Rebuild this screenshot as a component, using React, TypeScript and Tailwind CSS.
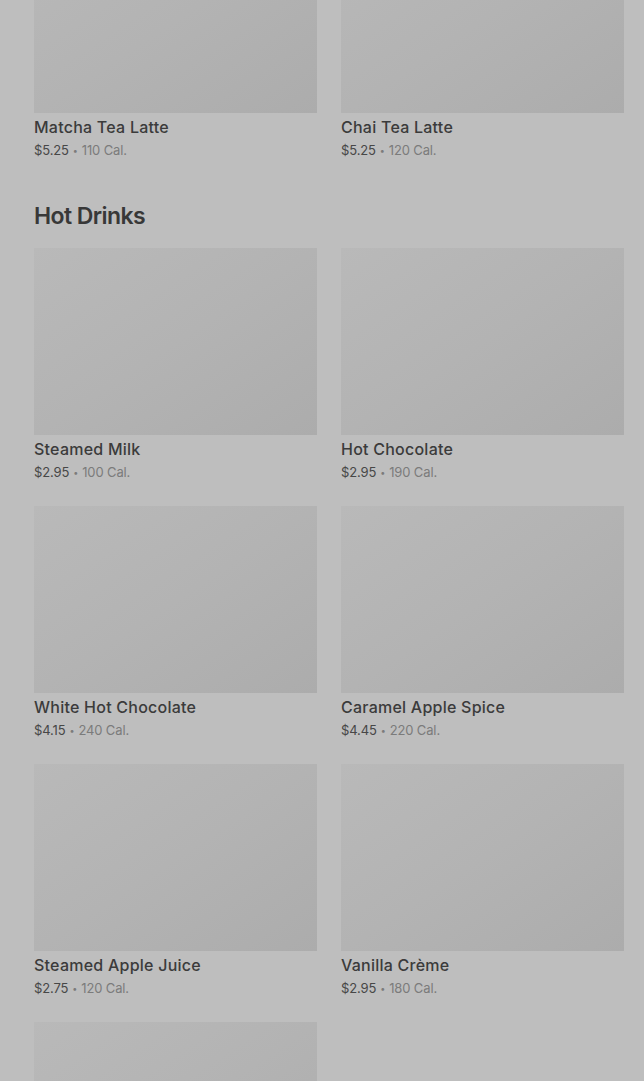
import React from 'react';

type Item = { name: string; price: string; cal: string };

const topRow: Item[] = [
  { name: 'Matcha Tea Latte', price: '$5.25', cal: '110 Cal.' },
  { name: 'Chai Tea Latte', price: '$5.25', cal: '120 Cal.' },
];

const hotDrinks: Item[] = [
  { name: 'Steamed Milk', price: '$2.95', cal: '100 Cal.' },
  { name: 'Hot Chocolate', price: '$2.95', cal: '190 Cal.' },
  { name: 'White Hot Chocolate', price: '$4.15', cal: '240 Cal.' },
  { name: 'Caramel Apple Spice', price: '$4.45', cal: '220 Cal.' },
  { name: 'Steamed Apple Juice', price: '$2.75', cal: '120 Cal.' },
  { name: 'Vanilla Crème', price: '$2.95', cal: '180 Cal.' },
  { name: '', price: '', cal: '' },
];

function MenuCard({ item }: { item: Item }) {
  return (
    <div className="flex flex-col pb-[1px]">
      {/* Image placeholder */}
      <div className="h-[187px] w-full bg-gradient-to-br from-[#b9b9b9] via-[#b3b3b3] to-[#acacac]" />
      {item.name && (
        <>
          <div className="mt-[2px] text-base leading-6 font-medium tracking-[0.015em] text-[#3b3b3b]">
            {item.name}
          </div>
          <div className="mt-[1px] flex items-center text-[13px] leading-5 tracking-[-0.01em] text-[#7b7b7b]">
            <span className="text-[#474747]">{item.price}</span>
            <span className="mx-[4px] text-[9px] leading-none">•</span>
            <span>{item.cal}</span>
          </div>
        </>
      )}
    </div>
  );
}

export default function App() {
  return (
    <div
      className="h-[1081px] w-[644px] overflow-hidden bg-[#bebebe]"
      style={{ fontFamily: 'Inter, "Liberation Sans", sans-serif' }}
    >
      <div className="-mt-[74px] pl-[34px] pr-[20px]">
        {/* Previous section (scrolled) */}
        <div className="grid grid-cols-2 gap-x-6">
          {topRow.map((item) => (
            <MenuCard key={item.name} item={item} />
          ))}
        </div>

        {/* Hot Drinks */}
        <h2 className="mt-[41px] text-[23px] leading-7 font-semibold tracking-tight text-[#383838]">
          Hot Drinks
        </h2>
        <div className="mt-[18px] grid grid-cols-2 gap-x-6 gap-y-[23px]">
          {hotDrinks.map((item, i) => (
            <MenuCard key={i} item={item} />
          ))}
        </div>
      </div>
    </div>
  );
}
